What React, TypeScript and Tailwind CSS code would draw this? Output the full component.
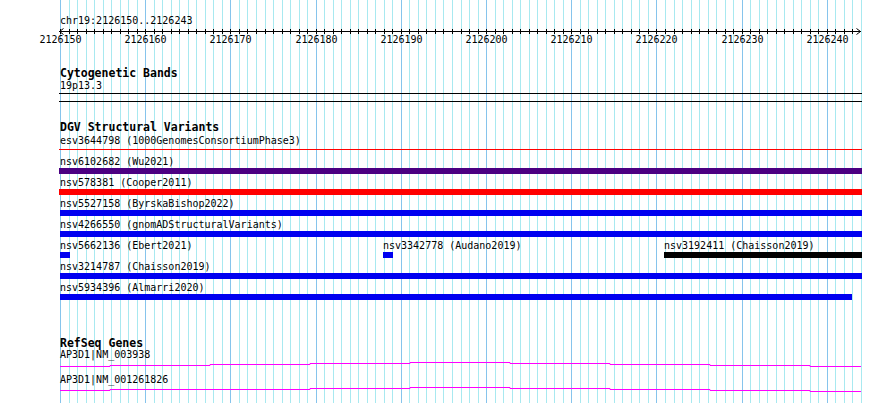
import React from "react";

// view: chr19:2126150..2126244 drawn from x=60 to x=861
const X0 = 60;
const BP = 801 / 94;
const START = 2126150;
const gx = (i: number) => Math.round(X0 + i * BP);

type Feat = { label: string; x: number; end: number; color: string; thin?: boolean };

const dgvRows: Feat[][] = [
  [{ label: "esv3644798 (1000GenomesConsortiumPhase3)", x: 59, end: 862, color: "#ff0000", thin: true }],
  [{ label: "nsv6102682 (Wu2021)", x: 59, end: 862, color: "#4b0082" }],
  [{ label: "nsv578381 (Cooper2011)", x: 59, end: 862, color: "#ff0000" }],
  [{ label: "nsv5527158 (ByrskaBishop2022)", x: 60, end: 862, color: "#0000f0" }],
  [{ label: "nsv4266550 (gnomADStructuralVariants)", x: 60, end: 862, color: "#0000f0" }],
  [
    { label: "nsv5662136 (Ebert2021)", x: 60, end: 70, color: "#0000f0" },
    { label: "nsv3342778 (Audano2019)", x: 383, end: 393, color: "#0000f0" },
    { label: "nsv3192411 (Chaisson2019)", x: 664, end: 862, color: "#000000" },
  ],
  [{ label: "nsv3214787 (Chaisson2019)", x: 60, end: 862, color: "#0000f0" }],
  [{ label: "nsv5934396 (Almarri2020)", x: 60, end: 852, color: "#0000f0" }],
];

// wiggle-ish transcript lines (step y per segment, relative to the row's line area)
const steps = [60, 110, 210, 310, 410, 510, 610, 710, 810, 861];
const genes = [
  { label: "AP3D1|NM_003938", ys: [5, 4, 3, 2, 1, 2, 3, 4, 5] },
  { label: "AP3D1|NM_001261826", ys: [4, 3, 3, 2, 1, 2, 3, 4, 5] },
];

function Grid() {
  const lines = [];
  for (let i = 0; i <= 94; i++) {
    const x = gx(i) + 0.5;
    lines.push(
      <line key={i} x1={x} x2={x} y1={0} y2={403} stroke={i % 10 === 0 ? "#86c4ec" : "#a8e9f0"} strokeWidth={1} />
    );
  }
  return (
    <svg className="absolute inset-0" width={890} height={403}>
      {lines}
    </svg>
  );
}

function Ruler() {
  const ticks = [];
  for (let i = 0; i <= 93; i++) {
    const x = gx(i) + 0.5;
    ticks.push(<line key={i} x1={x} x2={x} y1={2} y2={7} stroke="#000" strokeWidth={1} />);
  }
  const labels = [];
  for (let i = 0; i <= 90; i += 10) labels.push(i);
  return (
    <div className="relative h-[20px]">
      <svg className="absolute inset-0" width={890} height={20}>
        <line x1={59} x2={861} y1={4.5} y2={4.5} stroke="#000" strokeWidth={1} />
        {ticks}
        <polyline points="63.5,1.5 59.5,4.5 63.5,7.5" fill="none" stroke="#000" strokeWidth={1} />
        <polyline points="856.5,1.5 860.5,4.5 856.5,7.5" fill="none" stroke="#000" strokeWidth={1} />
      </svg>
      {labels.map((i) => (
        <span
          key={i}
          className="absolute top-[7px] leading-[12px] -translate-x-1/2 whitespace-nowrap"
          style={{ left: gx(i) + 0.5 }}
        >
          {START + i}
        </span>
      ))}
    </div>
  );
}

function TrackHeader({ children, className }: { children: React.ReactNode; className: string }) {
  return <div className={`pl-[60px] font-bold text-[11.5px] leading-[13px] ${className}`}>{children}</div>;
}

function FeatureRow({ feats }: { feats: Feat[] }) {
  return (
    <div className="relative h-[21px]">
      {feats.map((f) => (
        <React.Fragment key={f.label}>
          <span className="absolute top-0 leading-[12px] whitespace-nowrap" style={{ left: Math.max(f.x, 60) }}>
            {f.label}
          </span>
          <div
            className={f.thin ? "absolute top-[14px] h-px" : "absolute top-[12px] h-[6px]"}
            style={{ left: f.x, width: f.end - f.x, background: f.color }}
          />
        </React.Fragment>
      ))}
    </div>
  );
}

function GeneRow({ label, ys }: { label: string; ys: number[] }) {
  let d = `M${steps[0]} ${ys[0] + 0.5}`;
  ys.forEach((y, k) => {
    if (k > 0) d += ` V${y + 0.5}`;
    d += ` H${steps[k + 1]}`;
  });
  return (
    <div className="h-[25px]">
      <div className="pl-[60px] leading-[12px] h-[12px]">{label}</div>
      <svg width={890} height={13} className="block">
        <path d={d} fill="none" stroke="#ff00ff" strokeWidth={1} />
      </svg>
    </div>
  );
}

export default function App() {
  return (
    <div className="relative w-[890px] h-[403px] overflow-hidden bg-white text-black font-['DejaVu_Sans_Mono',monospace] text-[10px]">
      <Grid />
      <div className="relative flex flex-col">
        <div className="pt-[15px] pl-[60px] leading-[12px] h-[27px]">chr19:2126150..2126243</div>
        <Ruler />

        <TrackHeader className="mt-[20px] h-[13px]">Cytogenetic Bands</TrackHeader>
        <div className="pl-[60px] leading-[12px] h-[13px]">19p13.3</div>
        <div className="ml-[59px] w-[803px] h-[9px] border-y border-black" />

        <TrackHeader className="mt-[19px] h-[14px]">DGV Structural Variants</TrackHeader>
        {dgvRows.map((feats, k) => (
          <FeatureRow key={k} feats={feats} />
        ))}

        <TrackHeader className="mt-[34px] h-[12px]">RefSeq Genes</TrackHeader>
        {genes.map((g) => (
          <GeneRow key={g.label} label={g.label} ys={g.ys} />
        ))}
      </div>
    </div>
  );
}
